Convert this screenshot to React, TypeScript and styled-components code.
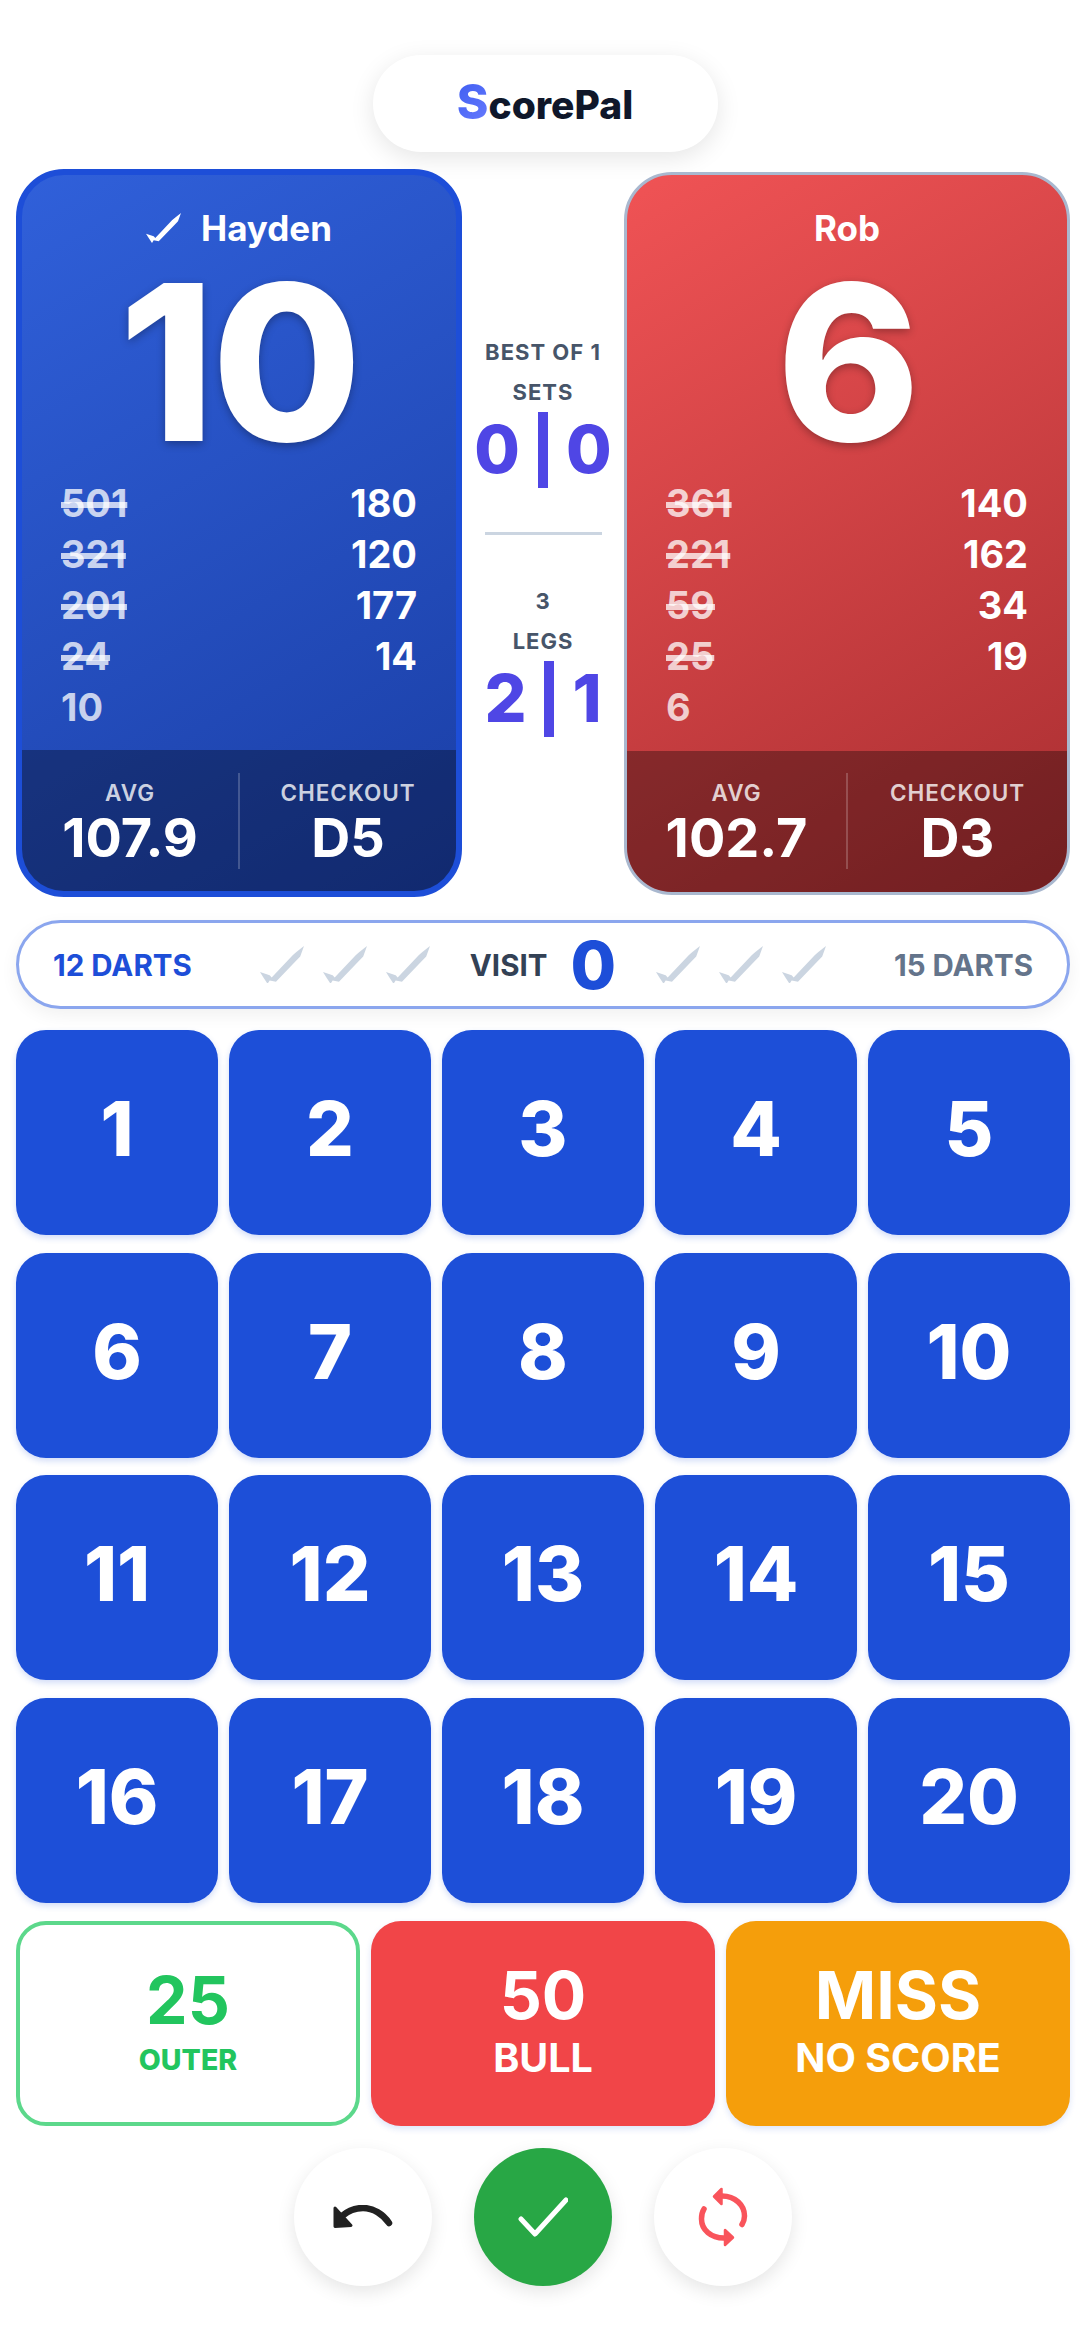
import React from "react";
import styled, { createGlobalStyle } from "styled-components";

const GlobalStyle = createGlobalStyle`
  html, body {
    margin: 0;
    padding: 0;
    background: #ffffff;
    font-family: Inter, "Liberation Sans", sans-serif;
  }
  * { box-sizing: border-box; }
`;

const Page = styled.div`
  width: 1080px;
  height: 2340px;
  padding: 55px 10px 0 16px;
  display: flex;
  flex-direction: column;
  overflow: hidden;
`;

const LogoPill = styled.div`
  align-self: center;
  width: 345px;
  height: 97px;
  margin-left: 4px;
  border-radius: 48px;
  background: #fff;
  box-shadow: 0 6px 24px rgba(0, 0, 0, 0.1);
  display: flex;
  align-items: baseline;
  justify-content: center;
  padding-top: 17px;
  font-weight: 800;
  font-size: 39px;
  color: #0f172a;
`;

const LogoS = styled.span`
  font-size: 48px;
  background: linear-gradient(135deg, #3b5bf0, #6a7dff);
  -webkit-background-clip: text;
  background-clip: text;
  color: transparent;
`;

const ScoreRow = styled.div`
  display: flex;
  margin-top: 17px;
  height: 728px;
  align-items: center;
  justify-content: space-between;
`;

const PlayerCard = styled.div<{ $active?: boolean; $side: "home" | "away" }>`
  width: ${(p) => (p.$active ? 446 : 446)}px;
  height: ${(p) => (p.$active ? 728 : 723)}px;
  border-radius: 48px;
  border: ${(p) => (p.$active ? "6px solid #1d4ed8" : "3px solid #a9b8cf")};
  overflow: hidden;
  display: flex;
  flex-direction: column;
  color: #fff;
  background: ${(p) =>
    p.$side === "home"
      ? "linear-gradient(150deg, #3060da 0%, #1a3ea5 100%)"
      : "linear-gradient(150deg, #f05355 0%, #a92e31 100%)"};
`;

const PlayerName = styled.div`
  display: flex;
  align-items: center;
  justify-content: center;
  gap: 20px;
  height: 54px;
  margin-top: 26px;
  font-size: 35px;
  font-weight: 700;
`;

const BigScore = styled.div`
  text-align: center;
  font-size: 217px;
  line-height: 200px;
  height: 200px;
  margin-top: 7px;
  font-weight: 800;
  letter-spacing: -3px;
  text-shadow: 0 3px 9px rgba(0, 0, 0, 0.3);
`;

const History = styled.div`
  flex: 1;
  padding: 16px 39px 0;
  display: grid;
  grid-template-columns: 1fr 1fr;
  grid-auto-rows: 51px;
  align-content: start;
  font-size: 38px;
  font-weight: 700;
  line-height: 51px;
`;

const Remaining = styled.div<{ $struck?: boolean }>`
  color: rgba(255, 255, 255, 0.75);
  text-decoration: ${(p) => (p.$struck ? "line-through" : "none")};
  text-decoration-thickness: 6px;
`;

const Thrown = styled.div`
  text-align: right;
`;

const StatsBar = styled.div`
  height: 141px;
  display: flex;
  align-items: center;
  background: rgba(0, 0, 0, 0.32);
`;

const Stat = styled.div<{ $divider?: boolean }>`
  flex: 1;
  height: 96px;
  padding-top: 4px;
  display: flex;
  flex-direction: column;
  align-items: center;
  justify-content: center;
  border-left: ${(p) => (p.$divider ? "2px solid rgba(255,255,255,0.2)" : "none")};
`;

const StatLabel = styled.div`
  font-size: 22.5px;
  font-weight: 600;
  color: rgba(255, 255, 255, 0.8);
  letter-spacing: 1px;
  line-height: 30px;
`;

const StatValue = styled.div`
  font-size: 54px;
  font-weight: 700;
  line-height: 60px;
`;

const MatchInfo = styled.div`
  width: 162px;
  display: flex;
  flex-direction: column;
  align-items: center;
  color: #475569;
  padding-top: 2px;
`;

const InfoLabel = styled.div`
  font-size: 22px;
  font-weight: 700;
  letter-spacing: 1px;
  line-height: 40px;
  color: #475569;
`;

const SetScore = styled.div`
  display: flex;
  align-items: center;
  gap: 18px;
  font-size: 66px;
  font-weight: 800;
  line-height: 75px;
  color: #4f46e5;
`;

const ScoreBar = styled.span`
  width: 10px;
  height: 76px;
  background: #4f46e5;
`;

const InfoDivider = styled.div`
  width: 117px;
  height: 3px;
  margin: 44px 0 46px;
  background: #cbd5e1;
`;

const VisitBar = styled.div`
  margin-top: 23px;
  height: 89px;
  border: 3px solid #8ba6ee;
  border-radius: 45px;
  background: #fff;
  box-shadow: 0 6px 18px rgba(0, 0, 0, 0.06);
  display: flex;
  align-items: center;
  justify-content: space-between;
  padding: 0 34px;
`;

const DartCount = styled.div<{ $active?: boolean }>`
  width: 167px;
  font-size: 29.5px;
  font-weight: 700;
  white-space: nowrap;
  color: ${(p) => (p.$active ? "#1d4ed8" : "#64748b")};
  text-align: ${(p) => (p.$active ? "left" : "right")};
`;

const DartGroup = styled.div`
  display: flex;
  gap: 19px;
`;

const VisitCenter = styled.div`
  display: flex;
  align-items: center;
  gap: 23px;
`;

const VisitLabel = styled.span`
  font-size: 29.5px;
  font-weight: 700;
  color: #334155;
`;

const VisitValue = styled.span`
  font-size: 66px;
  font-weight: 800;
  line-height: 66px;
  color: #1d4ed8;
`;

const NumberGrid = styled.div`
  margin-top: 21px;
  display: grid;
  grid-template-columns: repeat(5, 1fr);
  grid-auto-rows: 205px;
  column-gap: 11px;
  row-gap: 17.5px;
`;

const NumberKey = styled.button`
  border: none;
  border-radius: 30px;
  background: #1d4fd8;
  color: #fff;
  font-family: inherit;
  font-size: 75px;
  font-weight: 800;
  padding: 0 0 8px;
  box-shadow: 0 3px 6px rgba(29, 78, 216, 0.2);
`;

const SpecialRow = styled.div`
  margin-top: 18px;
  display: grid;
  grid-template-columns: repeat(3, 1fr);
  column-gap: 11px;
  height: 205px;
`;

const SpecialKey = styled.button<{ $kind: "outer" | "bull" | "miss" }>`
  border-radius: 30px;
  font-family: inherit;
  display: flex;
  flex-direction: column;
  align-items: center;
  justify-content: center;
  padding: 0 0 ${(p) => (p.$kind === "outer" ? 0 : 3)}px;
  border: ${(p) => (p.$kind === "outer" ? "4px solid #5cd88b" : "none")};
  background: ${(p) =>
    p.$kind === "outer" ? "#fff" : p.$kind === "bull" ? "#f14548" : "#f59e0b"};
  color: ${(p) => (p.$kind === "outer" ? "#22c55e" : "#fff")};
  box-shadow: ${(p) => (p.$kind === "outer" ? "none" : "0 3px 6px rgba(29, 78, 216, 0.15)")};
`;

const SpecialValue = styled.span`
  font-size: 66px;
  font-weight: 700;
  line-height: 72px;
`;

const SpecialLabel = styled.span<{ $small?: boolean }>`
  font-size: ${(p) => (p.$small ? 28.5 : 39.5)}px;
  font-weight: ${(p) => (p.$small ? 800 : 700)};
  line-height: ${(p) => (p.$small ? 47 : 54)}px;
`;

const ActionRow = styled.div`
  margin-top: 22px;
  display: flex;
  justify-content: center;
  align-items: center;
  gap: 42px;
`;

const RoundButton = styled.button<{ $confirm?: boolean }>`
  width: 138px;
  height: 138px;
  border: none;
  border-radius: 50%;
  padding: 0;
  display: flex;
  align-items: center;
  justify-content: center;
  background: ${(p) => (p.$confirm ? "#28a745" : "#fff")};
  box-shadow: 0 6px 18px rgba(0, 0, 0, 0.1);
`;

const DartIcon = ({ color = "#cbd5e1", size = 44 }: { color?: string; size?: number }) => (
  <svg width={size} height={size * 0.86} viewBox="0 0 35 30" fill={color}>
    <path d="M0 20.7L7.7 23.3 9.3 25 26 7.3 28.7 5 35 0 32 8.3 28.7 11.7 12.7 28.3 7.7 27.3 6 30 2.7 25z" />
  </svg>
);

const UndoIcon = () => (
  <svg width="60" height="24" viewBox="0 0 60 24" fill="none" stroke="#212121" strokeLinecap="round" strokeLinejoin="round">
    <path d="M9 11C16 5 24 3 30 3 40 3 50 9 56 18" strokeWidth="6.5" />
    <path d="M2 3L18 20.5 2 21.5z" fill="#212121" strokeWidth="3" />
  </svg>
);

const CheckIcon = () => (
  <svg width="50" height="40" viewBox="0 0 50 40" fill="none" stroke="#fff" strokeWidth="5" strokeLinecap="round" strokeLinejoin="round">
    <path d="M3 22l14 15L48 3" />
  </svg>
);

const SwapIcon = () => (
  <svg width="52" height="64" viewBox="16 5 52 64" fill="none" stroke="#f9545b" strokeWidth="5.5" strokeLinecap="round" strokeLinejoin="round">
    <path d="M41 16C54 16 63.5 25 63.5 36 63.5 39 62.5 42 61 44.5" />
    <path d="M23 29C21 32 20.5 36 20.5 39 20.5 50 30 58 43 58" />
    <path d="M33 16.5L40.5 9V24z" fill="#f9545b" strokeWidth="2.5" />
    <path d="M52 57.5L44 50V65z" fill="#f9545b" strokeWidth="2.5" />
  </svg>
);

type Player = {
  name: string;
  side: "home" | "away";
  active?: boolean;
  score: number;
  history: [number, number?][];
  avg: string;
  checkout: string;
};

const players: Player[] = [
  {
    name: "Hayden",
    side: "home",
    active: true,
    score: 10,
    history: [[501, 180], [321, 120], [201, 177], [24, 14], [10]],
    avg: "107.9",
    checkout: "D5",
  },
  {
    name: "Rob",
    side: "away",
    score: 6,
    history: [[361, 140], [221, 162], [59, 34], [25, 19], [6]],
    avg: "102.7",
    checkout: "D3",
  },
];

const Card = ({ player }: { player: Player }) => (
  <PlayerCard $active={player.active} $side={player.side}>
    <PlayerName>
      {player.active && <DartIcon color="#fff" size={35} />}
      {player.name}
    </PlayerName>
    <BigScore>{player.score}</BigScore>
    <History>
      {player.history.map(([left, thrown]) => (
        <React.Fragment key={left}>
          <Remaining $struck={thrown !== undefined}>{left}</Remaining>
          <Thrown>{thrown}</Thrown>
        </React.Fragment>
      ))}
    </History>
    <StatsBar>
      <Stat>
        <StatLabel>AVG</StatLabel>
        <StatValue>{player.avg}</StatValue>
      </Stat>
      <Stat $divider>
        <StatLabel>CHECKOUT</StatLabel>
        <StatValue>{player.checkout}</StatValue>
      </Stat>
    </StatsBar>
  </PlayerCard>
);

const App: React.FC = () => {
  return (
    <Page>
      <GlobalStyle />
      <LogoPill>
        <LogoS>S</LogoS>corePal
      </LogoPill>
      <ScoreRow>
        <Card player={players[0]} />
        <MatchInfo>
          <InfoLabel>BEST OF 1</InfoLabel>
          <InfoLabel>SETS</InfoLabel>
          <SetScore>
            0<ScoreBar />0
          </SetScore>
          <InfoDivider />
          <InfoLabel>3</InfoLabel>
          <InfoLabel>LEGS</InfoLabel>
          <SetScore>
            2<ScoreBar />1
          </SetScore>
        </MatchInfo>
        <Card player={players[1]} />
      </ScoreRow>
      <VisitBar>
        <DartCount $active>12 DARTS</DartCount>
        <DartGroup>
          <DartIcon />
          <DartIcon />
          <DartIcon />
        </DartGroup>
        <VisitCenter>
          <VisitLabel>VISIT</VisitLabel>
          <VisitValue>0</VisitValue>
        </VisitCenter>
        <DartGroup>
          <DartIcon />
          <DartIcon />
          <DartIcon />
        </DartGroup>
        <DartCount>15 DARTS</DartCount>
      </VisitBar>
      <NumberGrid>
        {Array.from({ length: 20 }, (_, i) => (
          <NumberKey key={i}>{i + 1}</NumberKey>
        ))}
      </NumberGrid>
      <SpecialRow>
        <SpecialKey $kind="outer">
          <SpecialValue>25</SpecialValue>
          <SpecialLabel $small>OUTER</SpecialLabel>
        </SpecialKey>
        <SpecialKey $kind="bull">
          <SpecialValue>50</SpecialValue>
          <SpecialLabel>BULL</SpecialLabel>
        </SpecialKey>
        <SpecialKey $kind="miss">
          <SpecialValue>MISS</SpecialValue>
          <SpecialLabel>NO SCORE</SpecialLabel>
        </SpecialKey>
      </SpecialRow>
      <ActionRow>
        <RoundButton>
          <UndoIcon />
        </RoundButton>
        <RoundButton $confirm>
          <CheckIcon />
        </RoundButton>
        <RoundButton>
          <SwapIcon />
        </RoundButton>
      </ActionRow>
    </Page>
  );
};

export default App;
